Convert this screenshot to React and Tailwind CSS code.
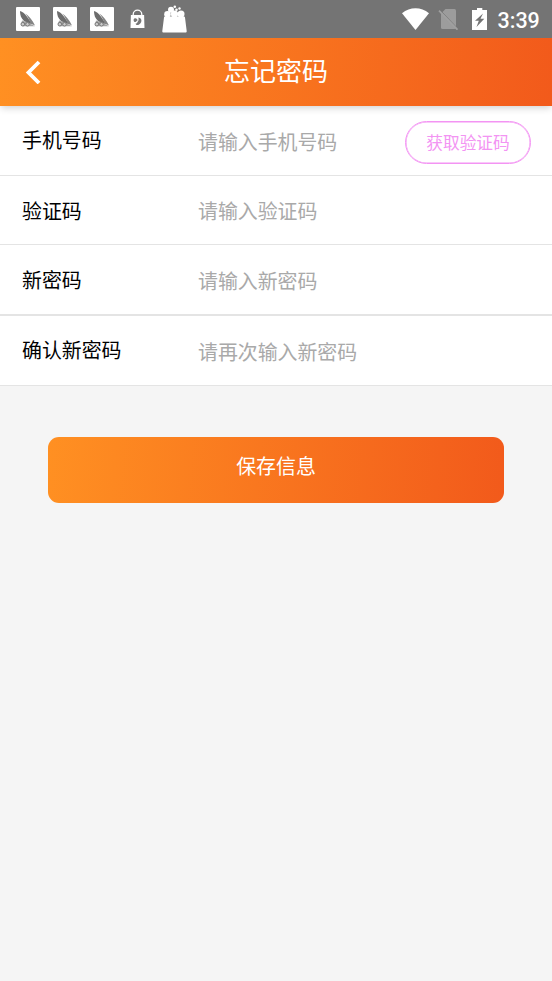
import React, { useState } from 'react';

const fields = [
    { id: 'phone', label: '手机号码', placeholder: '请输入手机号码', type: 'tel', row: 'h-[70px] border-b', labelPad: 'pb-px', inputPad: 'pt-[3px]' },
    { id: 'code', label: '验证码', placeholder: '请输入验证码', type: 'text', row: 'h-[69px] border-b', labelPad: 'pt-[2px]', inputPad: 'pt-[2px]' },
    { id: 'password', label: '新密码', placeholder: '请输入新密码', type: 'password', row: 'h-[71px] border-b-2', labelPad: '', inputPad: 'pt-[3px]' },
    { id: 'confirm', label: '确认新密码', placeholder: '请再次输入新密码', type: 'password', row: 'h-[70px] border-b', labelPad: 'pb-px', inputPad: 'pt-[3px]' },
];

const SailIcon = () => (
    <svg className="h-6 w-6" viewBox="0 0 24 24">
        <rect width="24" height="24" rx="1" fill="#fff" />
        <path d="M4 4c2.500.8 4.500 2.500 6.500 5l6 8.500-6.500-2.500C6 13 4 9 4 4z" fill="#6c6c6c" />
        <path d="M9.500 6.500c3.500 2.500 7 7 9.500 12l-4.500-2c-1-4-3-7-5-10z" fill="#858585" />
        <path d="M6 13.500l5 1.500 8 4.300H7c-2-.3-2.700-2-1.500-3.500z" fill="#a5a5a5" />
        <circle cx="6.800" cy="17.200" r="1.800" fill="#ccc" stroke="#777" strokeWidth="1" />
        <circle cx="11.500" cy="17.300" r="1.800" fill="#ccc" stroke="#777" strokeWidth="1" />
    </svg>
);

const LockBagIcon = () => (
    <svg className="h-5 w-[15px]" viewBox="0 0 15 20">
        <path d="M3.200 8V5.500a4.300 4.300 0 0 1 8.600 0V8" fill="none" stroke="#fff" strokeWidth="1.300" />
        <path d="M.9 6h13.200l.4 13H.5z" fill="#fff" />
        <path d="M3.600 11c0-2 2.600-2.500 3.500-.7l.5 1-2 1.800c-1.400.1-2-.9-2-2.100z" fill="#777" />
        <path d="M8.300 8.400c2.600.2 3.700 2.300 2.900 4.500-.8 2.100-2.700 3.300-4.800 3.100l-.9-1.200c1.200-.4 2-1.200 2.300-2.300.9-1.100 1-2.600.5-4.100z" fill="#777" />
    </svg>
);

const BasketIcon = () => (
    <svg className="h-7 w-[25px]" viewBox="0 0 25 28" fill="#fff">
        <path d="M2 12.500q0-1 1-1h19q1 0 1 1L24.700 26c.1 1-.4 1.600-1.400 1.600H1.700c-1 0-1.500-.6-1.400-1.600z" />
        <circle cx="5.500" cy="9.200" r="3.300" />
        <circle cx="9" cy="4.700" r="3" />
        <circle cx="12.500" cy="9" r="3.600" />
        <circle cx="19" cy="9" r="3.500" />
        <circle cx="12.800" cy="1.700" r="1.300" />
        <circle cx="14.500" cy="4.700" r="1.300" />
        <circle cx="17.500" cy="3.500" r="1.200" />
    </svg>
);

const WifiIcon = () => (
    <svg className="h-[22px] w-[27px]" viewBox="0 0 27 22">
        <path d="M13.500 22L0 5.200C8-1.500 19-1.500 27 5.200z" fill="#fff" />
    </svg>
);

const NoSimIcon = () => (
    <svg className="h-[22px] w-[21px]" viewBox="0 0 21 22">
        <path d="M7.500 1h9A1.500 1.500 0 0 1 18 2.500v17A1.500 1.500 0 0 1 16.500 21h-12A1.500 1.500 0 0 1 3 19.500V5.500z" fill="#9c9c9c" />
        <path d="M2.200 2.300l18 18.800" stroke="#747474" strokeWidth="1" />
        <path d="M1 2.700l18.500 19" stroke="#a0a0a0" strokeWidth="1.700" />
    </svg>
);

const BatteryIcon = () => (
    <svg className="h-[22px] w-[15px]" viewBox="0 0 15 22">
        <path d="M5 0h5.300v2H15v20H0V2h5z" fill="#fff" />
        <path d="M11 5.500L3 12.800H6.800L4.500 19l7.800-8.200H8.500z" fill="#747474" />
    </svg>
);

const StatusBar = () => (
    <div className="relative z-10 flex h-[38px] items-center bg-[#747474]">
        <div className="flex flex-1 items-center pl-4">
            <div className="flex gap-[12.800px]">
                <SailIcon />
                <SailIcon />
                <SailIcon />
            </div>
            <div className="ml-[16.400px]"><LockBagIcon /></div>
            <div className="ml-[17.500px]"><BasketIcon /></div>
        </div>
        <div className="flex items-center pr-3">
            <WifiIcon />
            <div className="ml-[9px]"><NoSimIcon /></div>
            <div className="ml-[13px]"><BatteryIcon /></div>
            <span className="ml-[10.500px] w-[42.500px] pt-[3px] font-['Roboto'] text-[21.500px] leading-6 font-medium text-white">3:39</span>
        </div>
    </div>
);

const Header = () => (
    <header className="relative flex h-[68px] items-center bg-linear-[95deg,#ff9022,#f25a1b] shadow-[0_3px_7px_-1px_rgba(0,0,0,0.18)]">
        <button type="button" className="w-16 pl-[25px]" aria-label="返回">
            <svg className="h-6 w-4" viewBox="0 0 16 24">
                <path d="M14 2L3.500 12.500 14 23" fill="none" stroke="#fff" strokeWidth="3.800" />
            </svg>
        </button>
        <h1 className="flex-1 pr-16 pb-[5px] text-center text-[26px] leading-9 text-white">忘记密码</h1>
    </header>
);

export default function App() {
    const [formData, setFormData] = useState({ phone: '', code: '', password: '', confirm: '' });

    const handleChange = (id, value) => {
        setFormData(prev => ({ ...prev, [id]: value }));
    };

    return (
        <div className="min-h-screen bg-[#f5f5f5] font-['Noto_Sans_CJK_SC',sans-serif]">
            <StatusBar />
            <Header />
            <form onSubmit={(e) => e.preventDefault()}>
                {fields.map(field => (
                    <div key={field.id} className={`flex items-center border-[#e4e4e4] bg-white pr-[21px] pl-[22px] ${field.row}`}>
                        <label htmlFor={field.id} className={`w-[176px] text-[19.900px] leading-7 text-black ${field.labelPad}`}>
                            {field.label}
                        </label>
                        <input
                            id={field.id}
                            type={field.type}
                            value={formData[field.id]}
                            onChange={(e) => handleChange(field.id, e.target.value)}
                            placeholder={field.placeholder}
                            className={`min-w-0 flex-1 text-[19.900px] leading-7 outline-none placeholder:text-[#a9a9a9] ${field.inputPad}`}
                        />
                        {field.id === 'phone' && (
                            <button type="button" className="mt-1 h-[43px] w-[126px] rounded-full border border-[#f394f3] text-[16.700px] text-[#f394f3] shadow-[inset_0_0_0_0.500px_#f394f3]">
                                获取验证码
                            </button>
                        )}
                    </div>
                ))}
                <div className="px-12 pt-[51px]">
                    <button type="submit" className="h-[66px] w-full rounded-[11px] bg-linear-[95deg,#ff9022,#f25a1b] pb-[9px] text-[19.900px] text-white">
                        保存信息
                    </button>
                </div>
            </form>
        </div>
    );
}
